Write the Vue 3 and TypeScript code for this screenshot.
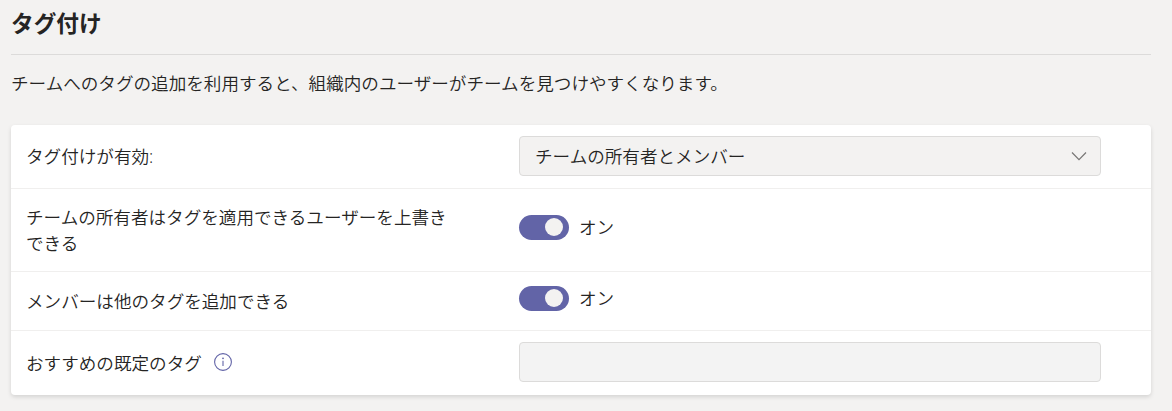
<script setup lang="ts">
import { ref } from 'vue'

interface ToggleSetting {
  id: string
  label: string
  on: boolean
}

const audience = ref('チームの所有者とメンバー')
const defaultTags = ref('')
const toggles = ref<ToggleSetting[]>([
  { id: 'override', label: 'チームの所有者はタグを適用できるユーザーを上書きできる', on: true },
  { id: 'members', label: 'メンバーは他のタグを追加できる', on: true },
])
</script>

<template>
  <section class="tagging">
    <h2 class="title">タグ付け</h2>
    <p class="description">チームへのタグの追加を利用すると、組織内のユーザーがチームを見つけやすくなります。</p>
    <div class="card">
      <div class="row row-select">
        <span class="label">タグ付けが有効:</span>
        <button class="field select" type="button">
          <span>{{ audience }}</span>
          <svg class="chevron" width="16" height="10" viewBox="0 0 16 10" aria-hidden="true">
            <path d="M1 1.5 L8 8.7 L15 1.5" />
          </svg>
        </button>
      </div>
      <div v-for="item in toggles" :key="item.id" class="row" :class="`row-${item.id}`">
        <span class="label">{{ item.label }}</span>
        <div class="toggle">
          <button
            class="switch"
            :class="{ on: item.on }"
            type="button"
            role="switch"
            :aria-checked="item.on"
            @click="item.on = !item.on"
          >
            <span class="knob"></span>
          </button>
          <span>{{ item.on ? 'オン' : 'オフ' }}</span>
        </div>
      </div>
      <div class="row row-input">
        <span class="label with-icon">
          <span>おすすめの既定のタグ</span>
          <svg class="info" width="18" height="18" viewBox="0 0 18 18" aria-hidden="true">
            <circle class="ring" cx="9" cy="9" r="8.4" />
            <circle class="dot" cx="9" cy="5.3" r="0.9" />
            <path class="stem" d="M9 7.8 V13" />
          </svg>
        </span>
        <input v-model="defaultTags" class="field input" type="text" />
      </div>
    </div>
  </section>
</template>

<style>
html,
body {
  background: #f3f2f1;
}
body {
  margin: 0;
}
</style>

<style scoped>
.tagging {
  box-sizing: border-box;
  width: 1172px;
  height: 411px;
  padding: 0 21px 0 11px;
  overflow: hidden;
  color: #252423;
  font-family: 'Open Sans', 'Noto Sans CJK JP', sans-serif;
  font-size: 17.58px;
  font-weight: 350;
  line-height: 26px;
}
.title {
  box-sizing: border-box;
  height: 55px;
  margin: 0;
  padding-top: 8px;
  border-bottom: 1px solid #dcdbda;
  font-size: 22.7px;
  font-weight: 700;
  line-height: 32px;
}
.description {
  height: 26px;
  margin: 15px 0 29px;
  white-space: nowrap;
}
.card {
  border-radius: 4px;
  background: #fff;
  box-shadow: 0 2px 4px rgba(0, 0, 0, 0.13);
}
.row {
  box-sizing: border-box;
  display: grid;
  grid-template-columns: 422px 582px;
  column-gap: 71px;
  align-items: center;
  padding-left: 15px;
  border-bottom: 1px solid #f0efee;
}
.row-select {
  height: 64px;
}
.row-select .label {
  padding-bottom: 2px;
}
.row-override {
  height: 83px;
}
.row-members {
  height: 59px;
}
.row-input {
  height: 64px;
  border-bottom: 0;
}
.with-icon {
  display: flex;
  align-items: center;
  gap: 12px;
}
.info {
  margin-bottom: 2px;
}
.field {
  box-sizing: border-box;
  width: 100%;
  height: 40px;
  margin: 0 0 2px;
  padding: 0 13px 0 15px;
  border: 1px solid #dcdbda;
  border-radius: 4px;
  outline: 0;
  background: #f3f2f1;
  color: inherit;
  font: inherit;
}
.input {
  background: #f3f3f3;
}
.select {
  display: flex;
  align-items: center;
  justify-content: space-between;
}
.chevron path {
  fill: none;
  stroke: #777675;
  stroke-width: 1.2;
}
.toggle {
  display: flex;
  align-items: center;
  gap: 10px;
  padding-bottom: 6px;
}
.switch {
  box-sizing: border-box;
  display: flex;
  align-items: center;
  width: 50px;
  height: 25px;
  padding: 0 6px;
  border: 0;
  border-radius: 13px;
  background: #8a8886;
}
.switch.on {
  justify-content: flex-end;
  background: #6264a7;
}
.knob {
  width: 18px;
  height: 18px;
  border-radius: 50%;
  background: #f3f2f1;
}
.ring,
.stem {
  fill: none;
  stroke: #6264a7;
  stroke-width: 1.1;
}
.dot {
  fill: #6264a7;
}
</style>
